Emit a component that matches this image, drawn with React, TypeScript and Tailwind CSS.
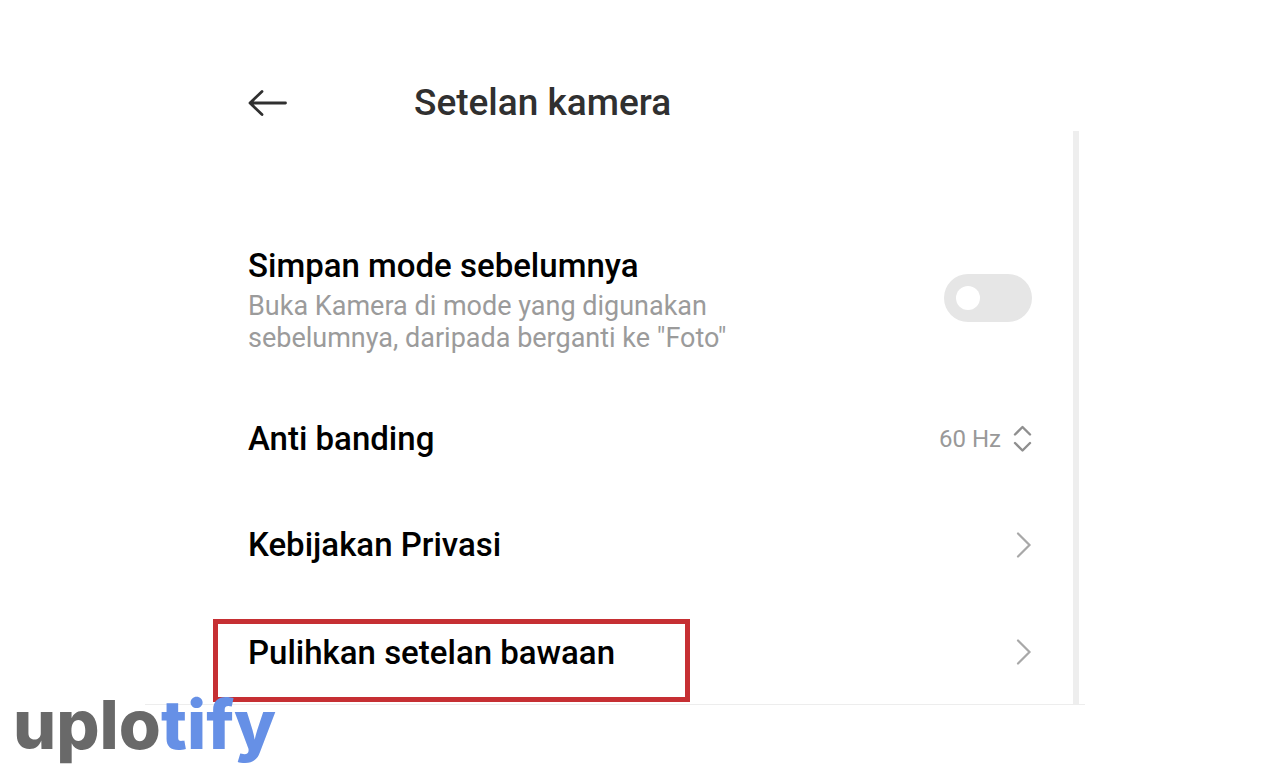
import { useState } from "react";

function BackArrow() {
  return (
    <svg width="40" height="28" viewBox="0 0 40 28" fill="none" stroke="#303030" strokeWidth="2.8" strokeLinecap="round" strokeLinejoin="round" aria-hidden="true">
      <path d="M37.5 14H2M14 2.5L2 14L14 25.5" />
    </svg>
  );
}

function Chevron() {
  return (
    <svg width="16" height="26" viewBox="0 0 16 26" fill="none" stroke="#a8a8a8" strokeWidth="2.2" strokeLinecap="round" aria-hidden="true">
      <path d="M2 1.5L13.5 13L2 24.5" />
    </svg>
  );
}

function UpDown() {
  return (
    <svg width="19" height="28" viewBox="0 0 19 28" fill="none" stroke="#8f8f8f" strokeWidth="2.4" strokeLinecap="round" strokeLinejoin="round" aria-hidden="true">
      <path d="M2 9.5L9.5 2L17 9.5M2 18L9.5 25.5L17 18" />
    </svg>
  );
}

export default function App() {
  const [keepMode, setKeepMode] = useState(false);

  return (
    <div className="relative min-h-screen bg-white pr-[195px] pl-[145px] font-['Roboto',sans-serif] text-black">
      <main className="border-b border-[#ededed]">
        <header className="flex h-[131px] items-center gap-[126px] pt-[75px] pl-[103px]">
          <button type="button" aria-label="Kembali" className="flex">
            <BackArrow />
          </button>
          <h1 className="text-[37px] leading-[44px] font-medium text-[#303030]">Setelan kamera</h1>
        </header>

        <div className="flex pr-[6px]">
          <div className="flex-1 pt-[115px] pr-[41px] pl-[68px]">
            <div className="flex h-[140px] justify-between pl-[35px]">
              <label htmlFor="keep-mode" className="block">
                <span className="block text-[33px] leading-[40px] font-medium">Simpan mode sebelumnya</span>
                <span className="mt-[4px] block max-w-[500px] text-[27px] leading-[32px] text-[#9b9b9b]">
                  Buka Kamera di mode yang digunakan sebelumnya, daripada berganti ke &quot;Foto&quot;
                </span>
              </label>
              <input
                id="keep-mode"
                type="checkbox"
                role="switch"
                checked={keepMode}
                onChange={(e) => setKeepMode(e.target.checked)}
                className="mt-[28px] h-[48px] w-[88px] shrink-0 appearance-none rounded-full bg-[#e6e6e6] px-[12px] before:mt-[12px] before:block before:size-[24px] before:rounded-full before:bg-white checked:bg-blue-500 checked:before:ml-auto"
              />
            </div>

            <div className="flex h-[106px] items-center justify-between pl-[35px]">
              <label htmlFor="banding" className="text-[33px] leading-[40px] font-medium">Anti banding</label>
              <div className="flex items-center gap-[12px]">
                <select id="banding" defaultValue="60" className="appearance-none bg-transparent text-[24px] leading-[30px] text-[#999999]">
                  <option value="60">60 Hz</option>
                </select>
                <UpDown />
              </div>
            </div>

            <a href="#privasi" className="flex h-[106px] items-center justify-between pl-[35px]">
              <span className="text-[33px] leading-[40px] font-medium">Kebijakan Privasi</span>
              <Chevron />
            </a>

            <button type="button" className="flex h-[106px] w-full items-start justify-between pt-[21px] text-left">
              <span className="block h-[83px] w-[477px] border-[5px] border-[#c62f33] px-[30px] pt-[9px] text-[33px] leading-[40px] font-medium">
                Pulihkan setelan bawaan
              </span>
              <span className="pt-[20px]">
                <Chevron />
              </span>
            </button>
          </div>
          <div className="w-[6px] bg-[#eeeeee]" />
        </div>
      </main>

      <div className="absolute top-[684px] left-[13px] font-['Inter',sans-serif] text-[68px] leading-[80px] font-extrabold text-[#696969]">
        uplo<span className="text-[#6690e6]">tify</span>
      </div>
    </div>
  );
}
